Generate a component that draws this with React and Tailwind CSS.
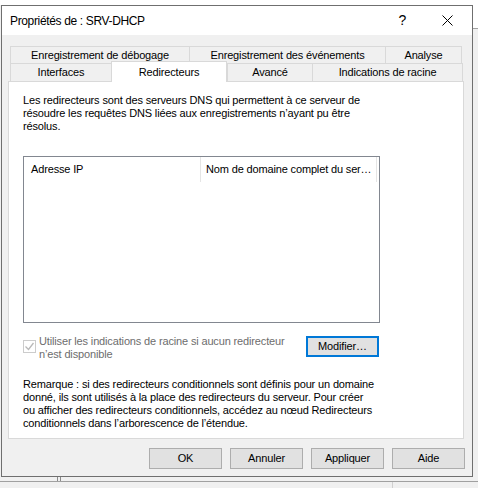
import React from "react";

const font = { fontFamily: '"Segoe UI", "Liberation Sans", Arial, sans-serif' };

function Tab({ label, width, selected, last }) {
  return (
    <div
      className={
        "flex items-center justify-center whitespace-nowrap border-t border-l border-[#d9d9d9] " +
        (last ? "border-r " : "") +
        (selected ? "relative z-10 -mt-[2px] h-[21px] self-start border-r bg-white" : "h-full bg-[#f0f0f0]")
      }
      style={{ width }}
    >
      {label}
    </div>
  );
}

function Button({ children, focused }) {
  return (
    <button
      className={
        "flex h-[21px] w-[73px] items-center justify-center bg-[#e1e1e1] text-black " +
        (focused ? "border-2 border-[#0078d7]" : "border border-[#adadad]")
      }
    >
      {children}
    </button>
  );
}

export default function App() {
  return (
    <div
      className="relative h-[488px] w-[478px] overflow-hidden bg-[#f0f0f0] text-[11px] leading-[13px] tracking-[-0.15px] text-black"
      style={font}
    >
      {/* desktop behind the dialog */}
      <div className="absolute left-0 top-0 h-[5px] w-full bg-white" />
      <div className="absolute right-0 top-0 h-[29px] w-[6px] border-b border-[#a0a0a0] bg-white" />
      <div className="absolute bottom-[6px] left-0 h-px w-full bg-[#a0a0a0]" />
      <div className="absolute bottom-[7px] left-[57px] h-[4px] w-[4px] border-x border-[#8a8a8a]" />
      <div className="absolute bottom-0 left-[392px] h-[6px] w-px bg-[#d0d0d0]" />

      {/* dialog window */}
      <div className="absolute left-[1px] top-[5px] flex h-[472px] w-[472px] flex-col border border-[#6f6f6f] bg-[#f0f0f0]">
        {/* title bar */}
        <div className="flex h-[29px] shrink-0 items-center bg-white text-[12px] tracking-[-0.35px]">
          <span className="ml-[8px] pt-[1px]">Propriétés de : SRV-DHCP</span>
          <span className="ml-auto mr-[36px] text-[14px]">?</span>
          <svg className="mr-[19px]" width="11" height="11" viewBox="0 0 11 11">
            <path d="M0.5 0.5 L10.5 10.5 M10.5 0.5 L0.5 10.5" stroke="#000" strokeWidth="1" />
          </svg>
        </div>

        {/* tabs */}
        <div className="ml-[8px] mt-[11px] flex h-[17px]">
          <Tab label="Enregistrement de débogage" width={179} />
          <Tab label="Enregistrement des événements" width={196} />
          <Tab label="Analyse" width={77} last />
        </div>
        <div className="ml-[8px] flex h-[18px]">
          <Tab label="Interfaces" width={101} />
          <Tab label="Redirecteurs" width={116} selected />
          <Tab label="Avancé" width={85} />
          <Tab label="Indications de racine" width={151} last />
        </div>

        {/* tab page */}
        <div className="ml-[6px] flex h-[358px] w-[456px] flex-col border border-[#d9d9d9] bg-white pl-[14px]">
          <p className="mt-[12px] whitespace-nowrap">
            Les redirecteurs sont des serveurs DNS qui permettent à ce serveur de
            <br />
            résoudre les requêtes DNS liées aux enregistrements n’ayant pu être
            <br />
            résolus.
          </p>

          <div className="mt-[23px] h-[167px] w-[357px] border border-[#828790] bg-white">
            <div className="flex h-[25px] items-center">
              <div className="flex h-full w-[177px] items-center border-r border-[#e5e5e5] pl-[7px]">Adresse IP</div>
              <div className="flex h-full w-[176px] items-center border-r border-[#e5e5e5] pl-[5px] whitespace-nowrap">
                Nom de domaine complet du ser…
              </div>
            </div>
          </div>

          <div className="mt-[13px] flex items-start">
            <div className="mt-[4px] flex h-[13px] w-[13px] shrink-0 items-center justify-center border border-[#cccccc] bg-white">
              <svg width="11" height="11" viewBox="0 0 11 11">
                <path d="M1.5 5.5 L4.5 8.5 L9.5 2" fill="none" stroke="#b8b8b8" strokeWidth="1.3" />
              </svg>
            </div>
            <p className="ml-[3px] mt-[-1px] w-[250px] text-[#6d6d6d]">
              <span className="block">Utiliser les indications de racine si aucun redirecteur</span>
              <span className="block">n’est disponible</span>
            </p>
            <div className="ml-[17px]">
              <Button focused>Modifier…</Button>
            </div>
          </div>

          <p className="mt-[17px] whitespace-nowrap">
            Remarque : si des redirecteurs conditionnels sont définis pour un domaine
            <br />
            donné, ils sont utilisés à la place des redirecteurs du serveur. Pour créer
            <br />
            ou afficher des redirecteurs conditionnels, accédez au nœud Redirecteurs
            <br />
            conditionnels dans l’arborescence de l’étendue.
          </p>
        </div>

        {/* dialog buttons */}
        <div className="mr-[7px] mt-[9px] flex justify-end gap-[8px]">
          <Button>OK</Button>
          <Button>Annuler</Button>
          <Button>Appliquer</Button>
          <Button>Aide</Button>
        </div>
      </div>
    </div>
  );
}
